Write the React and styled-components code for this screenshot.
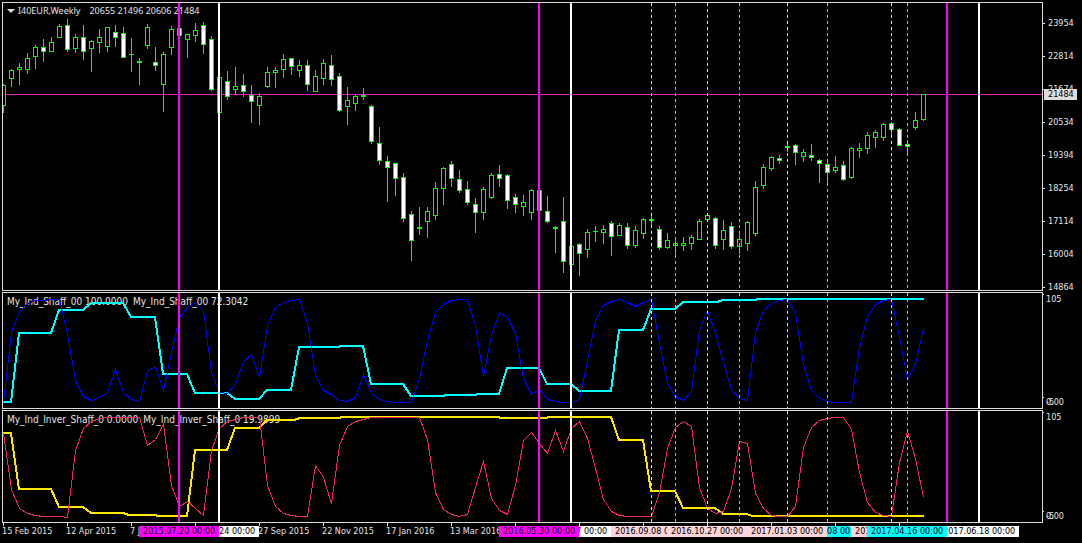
import React from "react";
import styled, { createGlobalStyle } from "styled-components";

const GlobalStyle = createGlobalStyle`
    body {
        margin: 0;
        background: #000;
    }
`;

const Terminal = styled.main`
    display: grid;
    grid-template-columns: 1fr 39px;
    grid-template-rows: 289px 117px 113px auto;
    row-gap: 1px;
    padding: 2px 0 0 2px;
    overflow: hidden;
    color: #e4e4e4;
    background: #000;
    font-family: "DejaVu Sans Condensed", "Noto Sans", sans-serif;
    font-size: 9px;
    line-height: 11px;
    white-space: nowrap;
`;

const Panel = styled.section`
    position: relative;
    min-width: 0;
    border: 1px solid #dcdcdc;
`;

// sits under the plot, so the lines run over the text
const Caption = styled.header`
    position: absolute;
    top: ${(props) => (props.$main ? 2 : 3)}px;
    left: 4px;
    display: flex;
    align-items: center;
    gap: ${(props) => (props.$main ? 3 : 5)}px;
    font-size: ${(props) => (props.$main ? 9 : 10)}px;
`;

const Title = styled.h1`
    display: flex;
    gap: 9px;
    margin: 0;
    font-family: "Noto Sans", sans-serif;
    font-size: inherit;
    font-weight: normal;
`;

const Arrow = styled.span`
    border: 4px solid transparent;
    border-top-color: #dcdcdc;
    border-bottom: 0;
`;

const Plot = styled.svg`
    position: relative;
    display: block;
    width: 100%;
    height: 100%;
    overflow: hidden;
    shape-rendering: crispEdges;
`;

const PriceScale = styled.aside`
    position: relative;
    padding-top: 5px;
`;

const Price = styled.div`
    display: flex;
    align-items: center;
    gap: 3px;
    height: 33px;

    &::before {
        content: "";
        width: 2px;
        height: 1px;
        background: #dcdcdc;
    }
`;

const CurrentPrice = styled.div`
    position: absolute;
    top: 87px;
    left: 1px;
    width: 29px;
    padding-left: 4px;
    color: #000;
    background: #dcdcdc;
`;

const LevelScale = styled.aside`
    display: flex;
    flex-direction: column;
    justify-content: space-between;
    padding: 2px 0 1px;
`;

const Level = styled.div`
    display: grid;
    padding-left: 3px;
    background: linear-gradient(#dcdcdc, #dcdcdc) no-repeat;
    background-size: 1px 1px;

    & > span {
        grid-area: 1 / 1;
    }
`;

const TimeScale = styled.footer`
    position: relative;
    grid-column: 1 / -1;
    display: flex;
    height: 20px;
    margin-top: -1px;
    padding-left: 1px;
`;

const Time = styled.div`
    flex: 0 0 64px;

    &::before {
        content: "";
        display: block;
        width: 1px;
        height: 3px;
        background: #dcdcdc;
    }

    & > time {
        display: block;
        margin-left: -1px;
    }
`;

const DateTag = styled.time`
    position: absolute;
    top: 3px;
    left: ${(props) => props.$x - 42}px;
    width: 76px;
    padding-left: 4px;
    color: #000;
    background: ${(props) => props.$color};
`;

const MAGENTA = "#ff00ff";
const WHITE = "#ffffff";
const PINK = "#ffd5d9";
const CYAN = "#00ffff";

const STEP = 8;
const FIRST = 3;

// high, body top, body bottom, low, 1 = falling week
const candles = [
    [84, 85, 106, 113, 0], [69, 70, 79, 87, 0], [63, 67, 70, 85, 0], [53, 58, 70, 74, 0],
    [45, 47, 57, 69, 0], [39, 47, 52, 62, 1], [37, 42, 52, 52, 0], [24, 26, 38, 38, 0],
    [19, 25, 50, 52, 1], [34, 37, 49, 53, 0], [25, 37, 52, 60, 1], [40, 41, 49, 72, 0],
    [29, 37, 43, 53, 0], [27, 27, 47, 52, 0], [25, 32, 38, 47, 1], [27, 33, 58, 58, 1],
    [38, 54, 55, 72, 0], [58, 61, 63, 85, 0], [24, 27, 46, 49, 0], [47, 62, 66, 71, 1],
    [52, 54, 85, 112, 0], [26, 29, 48, 55, 0], [28, 28, 36, 36, 1], [34, 34, 40, 58, 0],
    [23, 30, 36, 42, 0], [22, 25, 45, 54, 1], [36, 39, 90, 91, 1], [77, 77, 113, 113, 0],
    [71, 81, 97, 100, 1], [67, 86, 90, 95, 0], [74, 85, 92, 97, 1], [85, 95, 102, 123, 1],
    [93, 96, 106, 125, 0], [67, 72, 87, 88, 0], [67, 70, 73, 88, 0], [54, 59, 70, 78, 0],
    [58, 58, 67, 75, 1], [60, 65, 71, 77, 0], [60, 65, 85, 91, 1], [70, 76, 92, 92, 0],
    [59, 63, 79, 85, 0], [55, 65, 80, 86, 1], [73, 76, 111, 112, 1], [87, 100, 107, 125, 0],
    [95, 96, 104, 111, 0], [88, 95, 97, 100, 0], [105, 106, 142, 144, 1], [127, 143, 161, 165, 1],
    [156, 161, 168, 202, 1], [163, 163, 179, 196, 1], [173, 177, 219, 222, 1], [211, 214, 241, 261, 1],
    [207, 227, 229, 235, 0], [207, 211, 222, 238, 0], [182, 188, 216, 220, 0], [167, 168, 189, 205, 0],
    [161, 164, 179, 187, 1], [170, 179, 191, 193, 1], [181, 189, 203, 205, 1], [198, 204, 213, 233, 1],
    [187, 189, 213, 220, 0], [173, 175, 198, 199, 0], [165, 174, 179, 187, 1], [174, 175, 201, 209, 1],
    [194, 197, 205, 213, 1], [195, 202, 207, 216, 0], [189, 190, 213, 220, 0], [190, 190, 211, 211, 1],
    [196, 211, 222, 223, 1], [226, 227, 229, 253, 0], [197, 221, 262, 273, 1], [246, 246, 265, 265, 0],
    [243, 244, 254, 276, 1], [229, 232, 250, 258, 0], [226, 231, 232, 242, 0], [225, 229, 233, 244, 0],
    [221, 223, 237, 256, 1], [223, 225, 236, 236, 0], [223, 227, 246, 249, 1], [226, 230, 246, 248, 0],
    [218, 219, 234, 239, 0], [216, 219, 221, 226, 0], [226, 229, 248, 250, 1], [233, 240, 248, 249, 0],
    [240, 243, 246, 256, 0], [237, 243, 246, 251, 0], [235, 237, 244, 250, 0], [219, 221, 240, 240, 0],
    [215, 215, 220, 220, 0], [217, 218, 246, 249, 1], [220, 230, 240, 250, 0], [222, 226, 247, 249, 1],
    [233, 239, 247, 254, 0], [221, 222, 244, 251, 0], [181, 187, 234, 236, 0], [164, 167, 186, 189, 0],
    [156, 157, 169, 171, 0], [155, 158, 161, 164, 1], [144, 146, 148, 152, 0], [144, 145, 153, 165, 1],
    [149, 152, 157, 162, 0], [144, 155, 158, 161, 1], [159, 160, 164, 183, 1], [162, 164, 173, 184, 1],
    [156, 167, 171, 173, 0], [161, 165, 180, 181, 1], [147, 148, 178, 179, 0], [143, 148, 151, 158, 0],
    [132, 135, 149, 154, 0], [130, 132, 138, 148, 0], [123, 124, 138, 141, 0], [122, 123, 130, 136, 1],
    [128, 129, 146, 146, 1], [140, 144, 147, 154, 1], [112, 120, 128, 130, 0], [94, 94, 120, 121, 0],
];

// one value per week
const shaffFast = [
    402, 332, 311, 303, 300, 300, 299, 299, 334, 380, 396, 400, 397, 392, 369, 392,
    399, 401, 371, 366, 390, 352, 317, 307, 302, 310, 372, 392, 393, 384, 361, 354,
    377, 325, 307, 302, 300, 299, 323, 375, 390, 394, 400, 401, 397, 374, 393, 399,
    401, 402, 402, 402, 378, 340, 312, 304, 300, 299, 299, 325, 376, 335, 312, 317,
    333, 378, 394, 389, 399, 401, 402, 402, 399, 360, 320, 305, 301, 299, 302, 306,
    302, 299, 343, 383, 396, 400, 391, 330, 310, 333, 362, 389, 398, 400, 332, 310,
    303, 300, 299, 313, 364, 390, 398, 401, 402, 402, 402, 347, 316, 304, 300, 299,
    337, 379, 364, 328,
];

const inverFast = [
    433, 489, 508, 513, 515, 516, 516, 516, 517, 450, 428, 421, 418, 417, 417, 417,
    417, 417, 445, 439, 424, 485, 506, 501, 508, 515, 450, 428, 421, 419, 417, 417,
    417, 485, 506, 513, 515, 516, 516, 465, 477, 503, 445, 426, 421, 419, 417, 417,
    417, 417, 417, 417, 417, 439, 492, 509, 514, 516, 514, 487, 461, 498, 510, 514,
    485, 440, 432, 443, 453, 430, 451, 428, 421, 438, 468, 499, 511, 515, 516, 516,
    516, 516, 492, 448, 427, 421, 426, 487, 508, 513, 511, 488, 441, 443, 493, 508,
    515, 516, 516, 506, 447, 427, 420, 418, 417, 417, 429, 472, 502, 512, 515, 516,
    462, 431, 458, 497,
];

const shaffSlow =
    "3,402 11,402 19,333 51,333 59,310 83,310 91,303 123,303 131,317 155,317 163,374 187,374 195,393 227,393 235,399 259,399 267,390 291,390 299,347 338,347 341,346 363,346 371,384 403,384 411,396 443,396 446,395 475,395 478,394 499,394 507,368 539,368 547,384 571,384 579,391 611,391 619,330 643,330 651,309 675,309 683,302 717,302 723,300 755,300 758,299 924,299";

const inverSlow =
    "3,433 11,433 19,489 51,489 59,507 83,507 91,513 123,513 129,515 155,515 158,516 187,516 195,450 227,450 235,428 259,428 267,420 294,420 300,418 339,418 342,417 498,417 501,418 546,418 549,417 611,417 619,440 643,440 651,491 675,491 683,508 715,508 723,514 747,514 752,516 924,516";

const solidLines = [
    { x: 179, color: MAGENTA },
    { x: 219, color: WHITE },
    { x: 539, color: MAGENTA },
    { x: 571, color: WHITE },
    { x: 947, color: MAGENTA },
    { x: 979, color: WHITE },
];

const dashedLines = [
    { x: 651, color: PINK },
    { x: 675, color: CYAN },
    { x: 707, color: PINK },
    { x: 739, color: CYAN },
    { x: 787, color: PINK },
    { x: 827, color: CYAN },
    { x: 891, color: PINK },
    { x: 907, color: CYAN },
];

const prices = [23954, 22814, 21674, 20534, 19394, 18254, 17114, 16004, 14864];

const times = [
    "15 Feb 2015", "12 Apr 2015", "7 Jun 2015", "2 Aug 2015", "27 Sep 2015",
    "22 Nov 2015", "17 Jan 2016", "13 Mar 2016", "8 May 2016", "3 Jul 2016",
    "28 Aug 2016", "23 Oct 2016", "18 Dec 2016", "12 Feb 2017", "9 Apr 2017",
];

// later tags cover earlier ones
const tags = [
    { x: 219, color: WHITE, text: "2015.08.24 00:00" },
    { x: 179, color: MAGENTA, text: "2015.07.20 00:00" },
    { x: 571, color: WHITE, text: "2016.06.27 00:00" },
    { x: 539, color: MAGENTA, text: "2016.05.30 00:00" },
    { x: 675, color: CYAN, text: "2016.09.25 00:00" },
    { x: 651, color: PINK, text: "2016.09.08 00:00" },
    { x: 739, color: CYAN, text: "2016.11.20 00:00" },
    { x: 827, color: CYAN, text: "2017.02.08 00:00" },
    { x: 787, color: PINK, text: "2017.01.03 00:00" },
    { x: 707, color: PINK, text: "2016.10.27 00:00" },
    { x: 891, color: PINK, text: "2017.04.04 00:00" },
    { x: 979, color: WHITE, text: "2017.06.18 00:00" },
    { x: 907, color: CYAN, text: "2017.04.16 00:00" },
];

function Candle({ index, data }) {
    const [high, top, bottom, low, falling] = data;
    const x = FIRST + index * STEP;
    const height = bottom - top;

    return (
        <g>
            <rect x={x} y={high} width="1" height={low - high} fill="#00ff00" />
            <rect x={x - 2} y={top} width="5" height={height} fill="#00ff00" />
            {height > 2 && (
                <rect
                    x={x - 1}
                    y={top + 1}
                    width="3"
                    height={height - 2}
                    fill={falling ? "#fff" : "#000"}
                />
            )}
        </g>
    );
}

function Series({ values, color }) {
    const points = values
        .map((y, i) => `${FIRST + i * STEP + 0.5},${y + 0.5}`)
        .join(" ");

    return <polyline points={points} fill="none" stroke={color} />;
}

function EventLines({ top }) {
    return (
        <g>
            {dashedLines.map(({ x, color }) => (
                <line
                    key={x}
                    x1={x + 0.5}
                    x2={x + 0.5}
                    y1={top}
                    y2={top + 300}
                    stroke={color}
                    strokeDasharray="3 3"
                />
            ))}
            {solidLines.map(({ x, color }) => (
                <line
                    key={x}
                    x1={x}
                    x2={x}
                    y1={top}
                    y2={top + 300}
                    stroke={color}
                    strokeWidth="2"
                />
            ))}
        </g>
    );
}

function IndicatorPanel({ labels, top, slow, slowColor, fast, fastColor }) {
    return (
        <React.Fragment>
            <Panel>
                <Caption>
                    {labels.map((label) => (
                        <span key={label}>{label}</span>
                    ))}
                </Caption>
                <Plot>
                    <g transform={`translate(-3 ${-top})`}>
                        <polyline
                            points={slow}
                            fill="none"
                            stroke={slowColor}
                            strokeWidth="2"
                        />
                        <Series values={fast} color={fastColor} />
                        <EventLines top={top} />
                    </g>
                </Plot>
            </Panel>
            <LevelScale>
                <Level>
                    <span>105</span>
                </Level>
                <Level>
                    <span>0.00</span>
                    <span>-5</span>
                </Level>
            </LevelScale>
        </React.Fragment>
    );
}

export default function App() {
    return (
        <React.Fragment>
            <GlobalStyle />
            <Terminal>
                <Panel>
                    <Caption $main>
                        <Arrow />
                        <Title>
                            <span>I40EUR,Weekly</span>
                            <span>20655 21496 20606 21484</span>
                        </Title>
                    </Caption>
                    <Plot>
                        <g transform="translate(-3 -3)">
                            <rect x="6" y="94" width="100%" height="1" fill="#e01eb0" />
                            {candles.map((data, i) => (
                                <Candle key={i} index={i} data={data} />
                            ))}
                            <EventLines top={3} />
                        </g>
                    </Plot>
                </Panel>
                <PriceScale>
                    {prices.map((price) => (
                        <Price key={price}>{price}</Price>
                    ))}
                    <CurrentPrice>21484</CurrentPrice>
                </PriceScale>

                <IndicatorPanel
                    labels={["My_Ind_Shaff_00 100.0000", "My_Ind_Shaff_00 72.3042"]}
                    top={293}
                    slow={shaffSlow}
                    slowColor="#00ffff"
                    fast={shaffFast}
                    fastColor="#0000ff"
                />
                <IndicatorPanel
                    labels={["My_Ind_Inver_Shaff_0 0.0000", "My_Ind_Inver_Shaff_0 19.9899"]}
                    top={411}
                    slow={inverSlow}
                    slowColor="#ffe600"
                    fast={inverFast}
                    fastColor="#f0285a"
                />

                <TimeScale>
                    {times.map((time) => (
                        <Time key={time}>
                            <time>{time}</time>
                        </Time>
                    ))}
                    {tags.map(({ x, color, text }) => (
                        <DateTag key={text} $x={x} $color={color}>
                            {text}
                        </DateTag>
                    ))}
                </TimeScale>
            </Terminal>
        </React.Fragment>
    );
}
